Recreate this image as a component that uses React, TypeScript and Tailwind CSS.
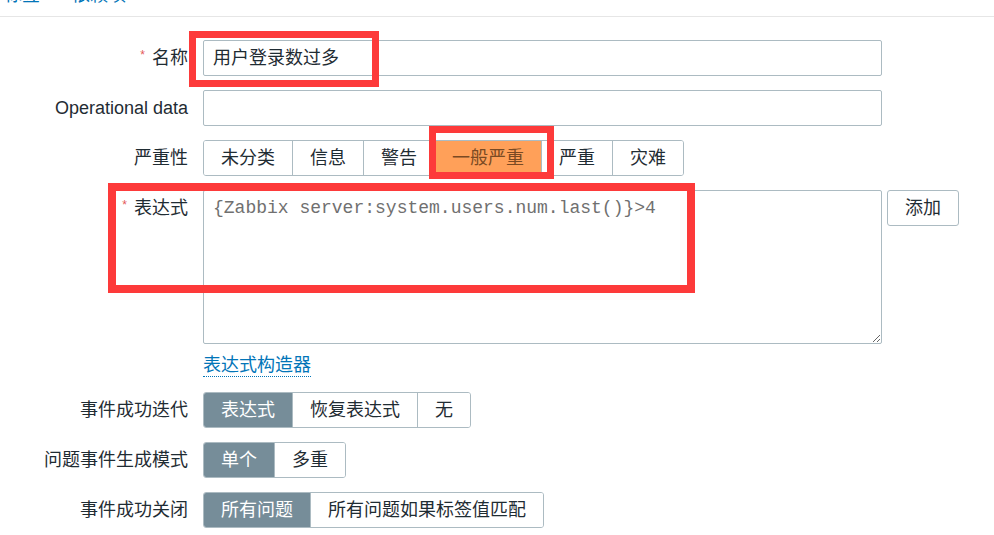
import React from 'react';

const font = '"Liberation Sans", "Noto Sans CJK SC", sans-serif';

interface SegProps {
  items: string[];
  selected: number;
  tone?: 'gray' | 'orange';
}

function Segmented({ items, selected, tone = 'gray' }: SegProps) {
  return (
    <div className="flex h-[36px] rounded-[3px] border border-[#acbbc2] overflow-hidden">
      {items.map((item, i) => {
        const active = i === selected;
        let cls = 'bg-white text-[#1f2c33]';
        if (active && tone === 'gray') cls = 'bg-[#768d99] text-white';
        if (active && tone === 'orange') cls = 'bg-[#ffa059] text-[#7a4a23]';
        return (
          <div
            key={item}
            className={`flex items-center px-[17px] leading-none ${i > 0 ? 'border-l border-[#acbbc2]' : ''} ${cls}`}
          >
            {item}
          </div>
        );
      })}
    </div>
  );
}

function Label({ text, required }: { text: string; required?: boolean }) {
  return (
    <div className="w-[188px] h-[36px] flex items-center justify-end shrink-0 text-[#1f2c33]">
      {required && <span className="text-[#e45959] text-[12px] mr-[7px] -mt-[6px]">*</span>}
      <span>{text}</span>
    </div>
  );
}

export default function App() {
  return (
    <div
      className="relative w-[994px] h-[535px] overflow-hidden bg-white text-[18px]"
      style={{ fontFamily: font }}
    >
      {/* tabs, cut off at top */}
      <div className="h-[17px] border-b border-[#e6e6e6] overflow-hidden">
        <div className="flex gap-[32px] pl-[4px] -mt-[14px] text-[#0275b8] leading-[18px]">
          <span>标签</span>
          <span>依赖项</span>
        </div>
      </div>

      <div className="pt-[23px] flex flex-col">
        {/* 名称 */}
        <div className="flex">
          <Label text="名称" required />
          <div className="ml-[15px] w-[679px] h-[36px] border border-[#acbbc2] rounded-[2px] flex items-center px-[9px] text-[#1f2c33]">
            用户登录数过多
          </div>
        </div>

        {/* Operational data */}
        <div className="flex mt-[14px]">
          <Label text="Operational data" />
          <div className="ml-[15px] w-[679px] h-[36px] border border-[#acbbc2] rounded-[2px]" />
        </div>

        {/* 严重性 */}
        <div className="flex mt-[14px]">
          <Label text="严重性" />
          <div className="ml-[15px]">
            <Segmented items={['未分类', '信息', '警告', '一般严重', '严重', '灾难']} selected={3} tone="orange" />
          </div>
        </div>

        {/* 表达式 */}
        <div className="flex mt-[14px]">
          <Label text="表达式" required />
          <div className="ml-[15px] flex flex-col">
            <div className="flex gap-[5px]">
              <textarea
                readOnly
                value="{Zabbix server:system.users.num.last()}>4"
                className="w-[679px] h-[154px] border border-[#acbbc2] rounded-[2px] px-[9px] py-[6px] text-[18px] text-[#707070] leading-[22px] outline-none"
                style={{ fontFamily: '"Liberation Mono", monospace' }}
              />
              <div className="h-[36px] px-[17px] border border-[#acbbc2] rounded-[3px] flex items-center text-[#1f2c33]">
                添加
              </div>
            </div>
            <div className="mt-[9px] h-[26px] flex items-center">
              <span className="text-[#0275b8] border-b border-dotted border-[#0275b8] leading-[21px]">表达式构造器</span>
            </div>
          </div>
        </div>

        <div className="flex mt-[13px]">
          <Label text="事件成功迭代" />
          <div className="ml-[15px]">
            <Segmented items={['表达式', '恢复表达式', '无']} selected={0} />
          </div>
        </div>

        <div className="flex mt-[14px]">
          <Label text="问题事件生成模式" />
          <div className="ml-[15px]">
            <Segmented items={['单个', '多重']} selected={0} />
          </div>
        </div>

        <div className="flex mt-[14px]">
          <Label text="事件成功关闭" />
          <div className="ml-[15px]">
            <Segmented items={['所有问题', '所有问题如果标签值匹配']} selected={0} />
          </div>
        </div>
      </div>

      {/* red annotation boxes */}
      <div className="absolute left-[189px] top-[31px] w-[190px] h-[56px] border-[7px] border-[#fd3a3a]" />
      <div className="absolute left-[429px] top-[126px] w-[125px] h-[53px] border-[7px] border-[#fd3a3a]" />
      <div className="absolute left-[108px] top-[183px] w-[587px] h-[110px] border-[8px] border-[#fd3a3a]" />
    </div>
  );
}
